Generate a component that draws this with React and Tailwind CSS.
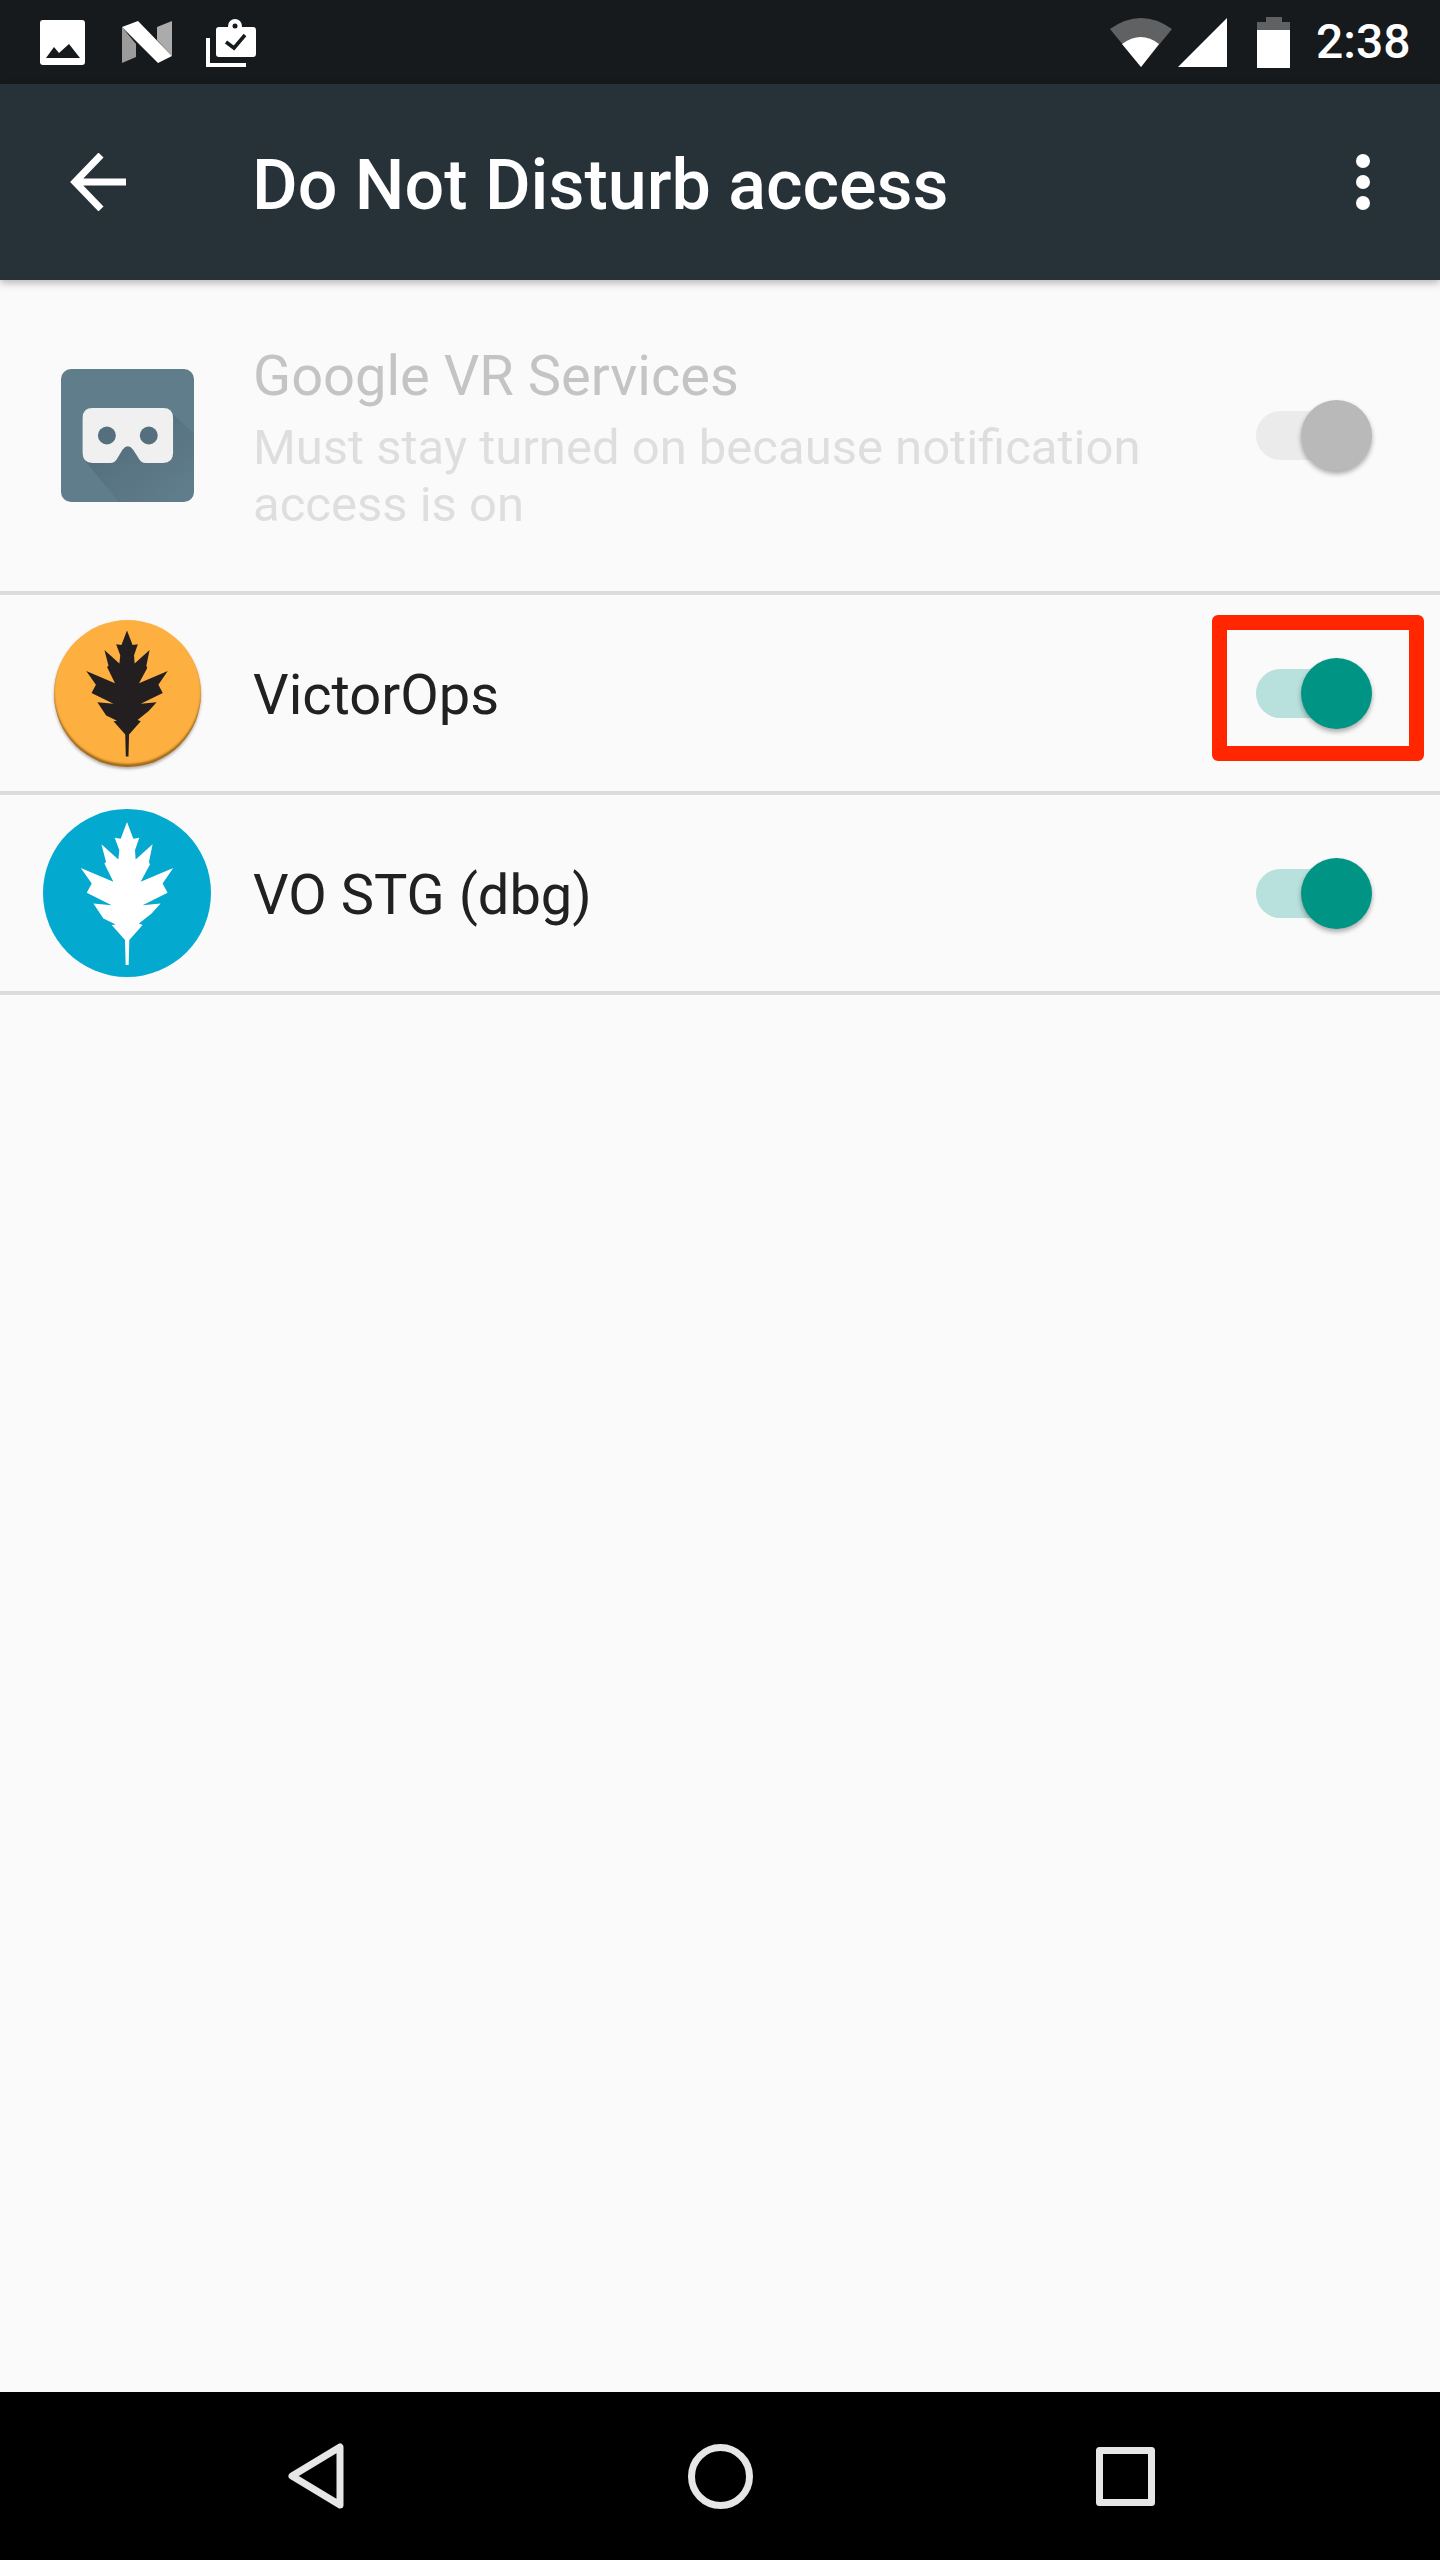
function ImageIcon() {
    return (
        <svg width="45" height="45" viewBox="0 0 45 45">
            <rect width="45" height="45" rx="3" fill="#fff" />
            <path d="M6 38 L14 27 L19 33 L29 24 L40 38 Z" fill="#161a1d" />
        </svg>
    );
}

function NougatIcon() {
    return (
        <svg width="50" height="42" viewBox="0 0 50 42">
            <path d="M0 6 L14 23 V36 L0 42 Z" fill="#9b9b9b" />
            <path d="M50 0 L35 6 V19 L50 35 Z" fill="#ababab" />
            <path d="M0 6 L16 0 L50 35 L36 42 Z" fill="#fff" />
        </svg>
    );
}

function ClipboardIcon() {
    return (
        <svg width="50" height="48" viewBox="0 0 50 48">
            <path d="M2 19 V46 H40" fill="none" stroke="#fff" strokeWidth="4" />
            <rect x="10" y="8" width="40" height="30" rx="3" fill="#fff" />
            <circle cx="29" cy="7" r="7" fill="#fff" />
            <circle cx="29" cy="7" r="2.5" fill="#161a1d" />
            <path d="M20 23 L28 29 L39 16" fill="none" stroke="#161a1d" strokeWidth="3.5" />
        </svg>
    );
}

function WifiIcon() {
    return (
        <svg width="62" height="49" viewBox="0 0 62 49">
            <path d="M31 49 L0 11 Q31 -11 62 11 Z" fill="#5f6162" />
            <path d="M31 49 L12 26 Q31 12 49 26 Z" fill="#fff" />
        </svg>
    );
}

function SignalIcon() {
    return (
        <svg width="49" height="49" viewBox="0 0 49 49">
            <path d="M0 49 L49 0 V49 Z" fill="#fff" />
        </svg>
    );
}

function BatteryIcon() {
    return (
        <svg width="33" height="51" viewBox="0 0 33 51">
            <path d="M9 0 H25 V5 H33 V13 H0 V5 H9 Z" fill="#5f6162" />
            <rect y="13" width="33" height="38" fill="#fff" />
        </svg>
    );
}

function Leaf({ width, height, fill }) {
    return (
        <svg width={width} height={height} viewBox="231 695 300 430">
            <path
                d="M381 695 L400 745 L418 742 L405 780 L407 808 L458 762 L447 815 L450 823 L422 875 L520 833 L488 880 L503 908 L428 945 L482 940 L455 970 L417 1000 L428 1005 L388 1050 L386 1125 L377 1125 L375 1050 L335 1005 L347 1003 L310 985 L280 940 L335 945 L260 908 L275 880 L242 833 L340 875 L313 820 L318 815 L304 762 L355 808 L358 780 L344 742 L362 745 Z"
                fill={fill}
            />
        </svg>
    );
}

function VrIcon() {
    return (
        <svg width="133" height="133" viewBox="0 0 400 400">
            <defs>
                <linearGradient id="vrShadow" x1="0.2" y1="0.2" x2="0.9" y2="0.9">
                    <stop offset="0" stopColor="#4f6776" stopOpacity="0.75" />
                    <stop offset="1" stopColor="#4f6776" stopOpacity="0" />
                </linearGradient>
            </defs>
            <rect width="400" height="400" rx="30" fill="#607d8b" />
            <path d="M330 130 L400 195 V370 Q400 400 370 400 H175 L75 280 Z" fill="url(#vrShadow)" />
            <path
                d="M95 117 H307 Q337 117 337 147 V253 Q337 283 307 283 H255 Q240 283 233 268 L217 243 Q201 222 185 243 L170 268 Q163 283 148 283 H95 Q65 283 65 253 V147 Q65 117 95 117 Z"
                fill="#f0f0f0"
            />
            <circle cx="138" cy="200" r="27" fill="#566f7e" />
            <circle cx="264" cy="200" r="27" fill="#566f7e" />
        </svg>
    );
}

function Toggle({ disabled }) {
    return (
        <div className="relative w-[116px] h-[71px] flex items-center">
            <div className={`w-[112px] h-[49px] rounded-full ${disabled ? 'bg-[#ebebeb]' : 'bg-[#b8e0dc]'}`} />
            <div
                className={`absolute right-0 top-0 w-[71px] h-[71px] rounded-full shadow-[0_3px_5px_rgba(0,0,0,0.32)] ${disabled ? 'bg-[#b9b9b9]' : 'bg-[#009485]'}`}
            />
        </div>
    );
}

function AppRow({ icon, label, children }) {
    return (
        <div className="relative h-[196px] flex items-center">
            <div className="w-[254px] flex justify-center shrink-0">{icon}</div>
            <div className="flex-1 -ml-[1px] mt-[4px] text-[56px] leading-[70px] text-[#212121]">{label}</div>
            <div className="pr-[68px]">
                <Toggle />
            </div>
            {children}
        </div>
    );
}

export default function App() {
    return (
        <div className="w-[1440px] h-[2560px] flex flex-col bg-[#fafafa] overflow-hidden font-['Roboto',sans-serif]">
            <div className="h-[84px] bg-[#161a1d] flex items-center shrink-0 pl-[40px] pr-[30px]">
                <ImageIcon />
                <div className="ml-[37px]"><NougatIcon /></div>
                <div className="ml-[34px] mt-[2px]"><ClipboardIcon /></div>
                <div className="flex-1" />
                <WifiIcon />
                <div className="ml-[6px]"><SignalIcon /></div>
                <div className="ml-[30px]"><BatteryIcon /></div>
                <div className="ml-[26px] w-[94px] text-[48px] leading-[84px] font-medium text-white">2:38</div>
            </div>

            <div className="relative z-10 h-[196px] bg-[#263238] shadow-[0_3px_8px_rgba(0,0,0,0.28)] flex items-center shrink-0 pl-[70px] pr-[70px]">
                <svg width="56" height="58" viewBox="0 0 56 58" fill="none" stroke="#fff" strokeWidth="7">
                    <path d="M4 29 H56 M31 2 L5 29 L31 56" />
                </svg>
                <div className="ml-[126px] mt-[6px] flex-1 text-[70px] leading-[84px] font-medium text-white whitespace-nowrap">
                    Do Not Disturb access
                </div>
                <div className="flex flex-col gap-[7px]">
                    <div className="w-[14px] h-[14px] rounded-full bg-white" />
                    <div className="w-[14px] h-[14px] rounded-full bg-white" />
                    <div className="w-[14px] h-[14px] rounded-full bg-white" />
                </div>
            </div>

            <div className="flex-1 flex flex-col">
                <div className="h-[311px] flex items-center shrink-0">
                    <div className="w-[254px] flex justify-center shrink-0">
                        <VrIcon />
                    </div>
                    <div className="w-[930px] -ml-[1px] mt-[2px]">
                        <div className="text-[56px] leading-[70px] text-[#c4c4c4]">Google VR Services</div>
                        <div className="text-[49px] leading-[57px] mt-[8px] text-[#dedede]">
                            Must stay turned on because notification access is on
                        </div>
                    </div>
                    <div className="flex-1" />
                    <div className="pr-[68px]">
                        <Toggle disabled />
                    </div>
                </div>
                <div className="h-[4px] bg-[#dcdcdc]" />
                <AppRow
                    label="VictorOps"
                    icon={
                        <div className="w-[147px] h-[147px] rounded-full bg-[#fdb03f] shadow-[inset_0_-3px_2px_rgba(90,50,0,0.55),0_2px_3px_rgba(0,0,0,0.3)] flex items-center justify-center">
                            <Leaf width={88} height={127} fill="#231f20" />
                        </div>
                    }
                >
                    <div className="absolute right-[16px] top-[20px] w-[212px] h-[146px] border-[15px] border-[#ff2600] rounded-[6px]" />
                </AppRow>
                <div className="h-[4px] bg-[#dcdcdc]" />
                <AppRow
                    label="VO STG (dbg)"
                    icon={
                        <div className="w-[168px] h-[168px] rounded-full bg-[#04a9cf] flex items-center justify-center">
                            <Leaf width={100} height={143} fill="#ffffff" />
                        </div>
                    }
                />
                <div className="h-[4px] bg-[#dcdcdc]" />
            </div>

            <div className="h-[168px] bg-black flex items-center shrink-0 pl-[288px]">
                <svg width="56" height="66" viewBox="0 0 56 66" fill="none" stroke="#e6e6e6" strokeWidth="7" strokeLinejoin="round">
                    <path d="M52 4 V62 L4 33 Z" />
                </svg>
                <svg className="ml-[344px]" width="65" height="65" viewBox="0 0 65 65" fill="none" stroke="#e6e6e6" strokeWidth="7">
                    <circle cx="32.5" cy="32.5" r="29" />
                </svg>
                <svg className="ml-[343px]" width="59" height="59" viewBox="0 0 59 59" fill="none" stroke="#e6e6e6" strokeWidth="7" strokeLinejoin="round">
                    <rect x="3.5" y="3.5" width="52" height="52" />
                </svg>
            </div>
        </div>
    );
}
